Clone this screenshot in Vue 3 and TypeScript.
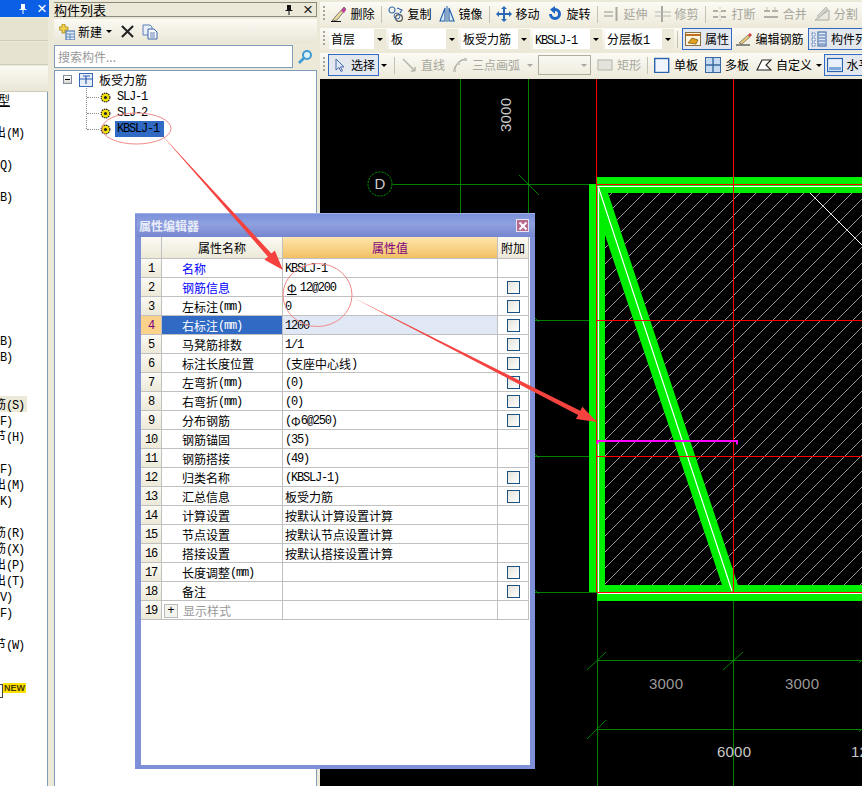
<template>
  <div class="app">
    <!-- left docked panel, mostly cut off -->
    <aside class="side">
      <div class="side-title">
        <svg class="pin" viewBox="0 0 10 12"><path d="M3 1h4v5h1.5v1h-3v4h-1V7h-3V6H3z" fill="#fff" /></svg>
        <span class="close-x white">×</span>
      </div>
      <div class="side-band"></div>
      <div class="side-band"></div>
      <div class="side-band light"></div>
      <div class="side-list">
        <div v-for="(r, i) in sideRows" :key="i" class="side-row" :class="{ hot: r.hot }">
          <span class="side-text" :class="{ short: r.short, uline: r.uline }">
            <span v-for="(p, j) in split(r.t)" :key="j" :class="{ lat: p.lat }">{{ p.t }}</span>
          </span>
          <template v-if="r.badge">
            <span class="side-check"></span>
            <span class="new-badge">NEW</span>
          </template>
        </div>
      </div>
    </aside>

    <!-- component list -->
    <section class="list-panel">
      <div class="list-title">
        <span>构件列表</span>
        <svg class="pin" viewBox="0 0 10 12"><path d="M3 1h4v5h1.5v1h-3v4h-1V7h-3V6H3z" fill="#111" /></svg>
        <span class="close-x">×</span>
      </div>
      <div class="list-tools">
        <svg class="ico" viewBox="0 0 16 16">
          <path d="M3 0h3v3h3v3H6v3H3V6H0V3h3z" fill="#f2d24a" stroke="#9a7a10" stroke-width=".7" />
          <rect x="7" y="7" width="9" height="9" fill="#dbe6f6" stroke="#3c6aa8" />
          <path d="M7 10h9M7 13h9M11 10v6" stroke="#3c6aa8" stroke-width=".7" />
        </svg>
        <span class="new-label">新建</span>
        <i class="caret"></i>
        <svg class="del" viewBox="0 0 14 14"><path d="M1 1l12 12M13 1L1 13" stroke="#222" stroke-width="2.2" /></svg>
        <svg class="ico copy" viewBox="0 0 16 16">
          <path d="M1 1h7l2 2v8H1z" fill="#e8eefa" stroke="#5c7fb8" />
          <path d="M6 5h6l3 3v7H6z" fill="#f6f8fe" stroke="#3c64a8" />
          <path d="M8 9h5M8 11h5M8 13h5" stroke="#3c64a8" stroke-width=".8" />
        </svg>
      </div>
      <div class="search">
        <div class="search-box">搜索构件...</div>
        <div class="search-btn">
          <svg viewBox="0 0 16 16" width="16" height="16">
            <circle cx="10" cy="6" r="4" fill="#dff2fb" stroke="#3e9bd4" stroke-width="2" />
            <path d="M7 9l-5 5" stroke="#3e9bd4" stroke-width="2.6" />
          </svg>
        </div>
      </div>
      <div class="tree">
        <div class="tree-root">
          <span class="minus"></span>
          <svg class="root-ico" viewBox="0 0 14 14">
            <rect x=".5" y=".5" width="13" height="13" fill="#e6eefa" stroke="#3a68b4" />
            <path d="M0 6h14M7 3v8M4 3h7" stroke="#2f5fae" stroke-width="1.2" fill="none" />
          </svg>
          <span class="root-text">板受力筋</span>
        </div>
        <div class="tree-kids">
          <div v-for="k in treeKids" :key="k" class="tree-kid">
            <svg class="gear" viewBox="0 0 10 10">
              <circle cx="5" cy="5" r="4" fill="#f4e000" stroke="#222" stroke-width="1" stroke-dasharray="1.4 .7" />
              <circle cx="5" cy="5" r="1.4" fill="#222" />
            </svg>
            <span class="kid-text lat" :class="{ sel: k === 'KBSLJ-1' }">{{ k }}</span>
          </div>
        </div>
      </div>
    </section>

    <!-- toolbars and the drawing -->
    <main class="work">
      <div class="bar first">
        <i class="grip"></i>
        <template v-for="it in toolRow1" :key="it.t">
          <i v-if="it.sep" class="sep"></i>
          <div class="tool" :class="{ off: it.off }">
            <svg class="ico" viewBox="0 0 16 16" v-html="icons[it.icon]"></svg>
            <span>{{ it.t }}</span>
          </div>
        </template>
      </div>

      <div class="bar second">
        <i class="grip"></i>
        <div v-for="(c, i) in combos" :key="c" class="combo" :class="{ narrow: i === 0 }">
          <span class="combo-text">
            <span v-for="(p, j) in split(c)" :key="j" :class="{ lat: p.lat }">{{ p.t }}</span>
          </span>
          <span class="combo-arrow"><i class="caret"></i></span>
        </div>
        <i class="sep tight"></i>
        <div class="tool on">
          <svg class="ico" viewBox="0 0 16 16" v-html="icons.prop"></svg>
          <span>属性</span>
        </div>
        <div class="tool">
          <svg class="ico" viewBox="0 0 16 16" v-html="icons.edit"></svg>
          <span>编辑钢筋</span>
        </div>
        <div class="tool on">
          <svg class="ico" viewBox="0 0 16 16" v-html="icons.list"></svg>
          <span>构件列表</span>
        </div>
      </div>

      <div class="bar third">
        <i class="grip"></i>
        <div class="tool on pick">
          <svg class="ico" viewBox="0 0 16 16" v-html="icons.pick"></svg>
          <span>选择</span>
        </div>
        <i class="caret pick-caret"></i>
        <i class="sep after-pick"></i>
        <div class="tool off">
          <svg class="ico" viewBox="0 0 16 16" v-html="icons.line"></svg>
          <span>直线</span>
        </div>
        <div class="tool off">
          <svg class="ico" viewBox="0 0 16 16" v-html="icons.arc"></svg>
          <span>三点画弧</span>
        </div>
        <i class="caret faded arc-caret"></i>
        <div class="combo dim-combo"><span class="combo-arrow"><i class="caret faded"></i></span></div>
        <div class="tool off">
          <svg class="ico" viewBox="0 0 16 16" v-html="icons.rect"></svg>
          <span>矩形</span>
        </div>
        <i class="sep"></i>
        <div class="tool">
          <svg class="ico" viewBox="0 0 16 16" v-html="icons.single"></svg>
          <span>单板</span>
        </div>
        <div class="tool">
          <svg class="ico" viewBox="0 0 16 16" v-html="icons.multi"></svg>
          <span>多板</span>
        </div>
        <div class="tool">
          <svg class="ico" viewBox="0 0 16 16" v-html="icons.custom"></svg>
          <span>自定义</span>
        </div>
        <i class="caret"></i>
        <div class="tool on flat">
          <svg class="ico" viewBox="0 0 16 16" v-html="icons.flat"></svg>
          <span>水平</span>
        </div>
      </div>

      <div class="canvas">
        <!-- viewBox uses page coordinates so the drawing reads off the screenshot -->
        <svg viewBox="320 79 542 707" width="542" height="707">
          <defs>
            <pattern id="hatch" width="16" height="16" patternUnits="userSpaceOnUse" patternTransform="translate(5 0)">
              <path d="M-1 17L17 -1" stroke="#969696" stroke-width="1" shape-rendering="crispEdges" />
            </pattern>
          </defs>

          <rect x="605" y="193" width="257" height="392" fill="url(#hatch)" />
          <path d="M810 193L862 245" stroke="#fff" stroke-width="1" />

          <g stroke="#007f00" stroke-width="1" shape-rendering="crispEdges">
            <path d="M460.5 79V600M528.5 79V600M597.5 590V786" />
            <path d="M393 184.5H597M535 320.5H597M535 456.5H597M535 592.5H597" />
            <path d="M597 660.5H862M597 729.5H862" />
            <path d="M733.5 590V786" />
          </g>
          <g stroke="#007f00" stroke-width="1">
            <path d="M519 175L539 195M528 311L539 322M528 447L539 458M528 583L539 594" />
            <path d="M587 670L606 652M723 670L743 652M587 739L606 720M859 663L862 660M859 732L862 729" />
          </g>
          <circle cx="380" cy="184" r="12" fill="none" stroke="#00a000" stroke-width="1" stroke-dasharray="2 1.2" />
          <text x="380" y="189" class="axis">D</text>

          <!-- green slab outline -->
          <g fill="#00ee00">
            <rect x="597" y="177" width="265" height="16" />
            <rect x="589" y="184" width="16" height="408" />
            <rect x="597" y="585" width="265" height="16" />
            <polygon points="598,186 608,193 738,585 722,585 598,214" />
          </g>
          <g fill="none" stroke="#fff" stroke-width="1.2">
            <path d="M598 186L732 591" />
            <path d="M598 186.5H862M598.5 186V592M598 593.5H862" />
          </g>
          <g stroke="#ff0000" stroke-width="1" shape-rendering="crispEdges" fill="none">
            <path d="M596.5 79V592M733.5 79V592" />
            <path d="M597 184.5H862M597 320.5H862M597 456.5H862M597 592.5H862" />
          </g>
          <path d="M597 441H737V444.5M597.5 441V444" fill="none" stroke="#ff00ff" stroke-width="2" />

          <text class="dim bright" transform="translate(511 132) rotate(-90)">3000</text>
          <text class="dim" x="649" y="689">3000</text>
          <text class="dim" x="785" y="689">3000</text>
          <text class="dim bright" x="717" y="757">6000</text>
          <text class="dim bright" x="851" y="757">12</text>
        </svg>
      </div>
    </main>

    <!-- property editor floating over the workspace -->
    <div class="dialog">
      <div class="dlg-title">
        <span>属性编辑器</span>
        <span class="dlg-close">
          <svg viewBox="0 0 10 10" width="10" height="10"><path d="M1.5 1.5l7 7M8.5 1.5l-7 7" stroke="#fff" stroke-width="2" /></svg>
        </span>
      </div>
      <div class="dlg-body">
        <div class="grid">
          <div class="cell no head"></div>
          <div class="cell name head">属性名称</div>
          <div class="cell value head val-head">属性值</div>
          <div class="cell add head">附加</div>

          <template v-for="r in rows" :key="r.no">
            <div class="cell no" :class="{ cur: r.no === 4 }"><span class="lat">{{ r.no }}</span></div>
            <div class="cell name" :class="{ cur: r.no === 4, link: r.no <= 2, muted: r.no === 19 }">
              <span v-if="r.no === 19" class="plus">+</span>
              <span v-for="(p, j) in split(r.name)" :key="j" :class="{ lat: p.lat, unit: p.lat }">{{ p.t }}</span>
            </div>
            <div class="cell value" :class="{ cur: r.no === 4 }">
              <span
                v-for="(p, j) in split(r.value)"
                :key="j"
                :class="{ lat: p.lat, rebar: r.no === 2 && p.t === 'Φ' }"
              >{{ p.t }}</span>
            </div>
            <div class="cell add"><span v-if="r.check" class="check"></span></div>
          </template>
        </div>
      </div>
    </div>

    <!-- red markup drawn on top of the screenshot -->
    <svg class="markup" viewBox="0 0 862 786" width="862" height="786">
      <ellipse cx="136.5" cy="128.5" rx="34.5" ry="15.5" />
      <ellipse cx="317.5" cy="295" rx="34.5" ry="31.5" />
      <polygon :points="arrow1" />
      <polygon :points="arrow2" />
    </svg>
  </div>
</template>

<script setup lang="ts">
interface PropRow {
  no: number
  name: string
  value: string
  check: boolean
}

interface SideRow {
  t: string
  short?: boolean
  uline?: boolean
  hot?: boolean
  badge?: boolean
}

const treeKids = ['SLJ-1', 'SLJ-2', 'KBSLJ-1']
const combos = ['首层', '板', '板受力筋', 'KBSLJ-1', '分层板1']

// [name, value, has checkbox]
const rawRows: [string, string, boolean][] = [
  ['名称', 'KBSLJ-1', false],
  ['钢筋信息', 'Φ12@200', true],
  ['左标注(mm)', '0', true],
  ['右标注(mm)', '1200', true],
  ['马凳筋排数', '1/1', true],
  ['标注长度位置', '(支座中心线)', true],
  ['左弯折(mm)', '(0)', true],
  ['右弯折(mm)', '(0)', true],
  ['分布钢筋', '(Φ6@250)', true],
  ['钢筋锚固', '(35)', false],
  ['钢筋搭接', '(49)', false],
  ['归类名称', '(KBSLJ-1)', true],
  ['汇总信息', '板受力筋', true],
  ['计算设置', '按默认计算设置计算', false],
  ['节点设置', '按默认节点设置计算', false],
  ['搭接设置', '按默认搭接设置计算', false],
  ['长度调整(mm)', '', true],
  ['备注', '', true],
  ['显示样式', '', false]
]
const rows: PropRow[] = rawRows.map(([name, value, check], i) => ({ no: i + 1, name, value, check }))

const blank: SideRow = { t: '' }
const sideRows: SideRow[] = [
  { t: '型', short: true, uline: true }, blank,
  { t: '出(M)' }, blank,
  { t: '(Q)', short: true }, blank,
  { t: '(B)', short: true }, blank, blank, blank, blank, blank, blank, blank, blank,
  { t: '(B)', short: true },
  { t: '(B)', short: true }, blank, blank,
  { t: '筋(S)', hot: true },
  { t: '(F)', short: true },
  { t: '节(H)' }, blank,
  { t: '(F)', short: true },
  { t: '出(M)' },
  { t: '(K)', short: true }, blank,
  { t: '筋(R)' },
  { t: '筋(X)' },
  { t: '出(P)' },
  { t: '出(T)' },
  { t: '(V)', short: true },
  { t: '(F)', short: true }, blank,
  { t: '节(W)' }, blank, blank,
  { t: '', badge: true }
]

const toolRow1 = [
  { t: '删除', icon: 'erase' },
  { t: '复制', icon: 'copy', sep: true },
  { t: '镜像', icon: 'mirror' },
  { t: '移动', icon: 'move', sep: true },
  { t: '旋转', icon: 'rotate' },
  { t: '延伸', icon: 'extend', sep: true, off: true },
  { t: '修剪', icon: 'trim', off: true },
  { t: '打断', icon: 'breakLine', sep: true, off: true },
  { t: '合并', icon: 'join', off: true },
  { t: '分割', icon: 'split', off: true }
]

const icons: Record<string, string> = {
  erase: '<path d="M1 15l5-1 9-11-2-2-9 10z" fill="#e8d8a0" stroke="#555" stroke-width=".7"/><path d="M10 5l3 2 2-3-2-3z" fill="#c0409a"/><path d="M0 15.5h10" stroke="#111"/>',
  copy: '<circle cx="4" cy="4" r="3" fill="none" stroke="#3b6ea8" stroke-width="1.2"/><circle cx="11" cy="12" r="3.4" fill="none" stroke="#555" stroke-width="1.2"/><circle cx="9" cy="10" r="3" fill="none" stroke="#3b6ea8"/><path d="M9 2l5 2-2 3" fill="none" stroke="#2d62a8" stroke-width="1.2"/>',
  mirror: '<path d="M6 2L1 15h5zM10 2l5 13h-5z" fill="#dce8f6" stroke="#1f5ca8" stroke-width="1.1"/><path d="M8 0v16" stroke="#1f5ca8"/>',
  move: '<path d="M8 0l3 3H9v4h4V5l3 3-3 3V9H9v4h2l-3 3-3-3h2V9H3v2L0 8l3-3v2h4V3H5z" fill="#2a69b8"/>',
  rotate: '<path d="M8 2a6 6 0 1 1-6 6h3a3 3 0 1 0 3-3v3L3 3.5 8 0z" fill="#1f66c4"/>',
  extend: '<path d="M0 6h9M0 10h9" stroke="#b4b4aa" stroke-width="1.4"/><path d="M12.5 1v14" stroke="#a8a8a0" stroke-width="2"/>',
  trim: '<path d="M7 0v16" stroke="#a8a8a0" stroke-width="2"/><path d="M0 6h16M0 10h16" stroke="#b8b8ae" stroke-width="1.2"/>',
  breakLine: '<path d="M1 5h14M1 11h14" stroke="#b0b0a6" stroke-width="2" stroke-dasharray="5 3"/><path d="M8 1v14" stroke="#c8c8be" stroke-dasharray="2 2"/>',
  join: '<path d="M1 5h6M9 5h6M1 11h14" stroke="#b0b0a6" stroke-width="2"/><path d="M4 1v3M12 1v3" stroke="#c0c0b6"/>',
  split: '<path d="M1 14h14V4z" fill="#e8e8de" stroke="#aaaaa0"/><path d="M3 10l9-9 2 2-9 9z" fill="#d0d0c6" stroke="#aaaaa0" stroke-width=".6"/>',
  prop: '<rect x=".5" y="1.5" width="15" height="13" fill="#fff6e0" stroke="#8a7040"/><path d="M1 4h14" stroke="#c07020" stroke-width="2"/><path d="M3 12l4-5 6 2-2 4z" fill="#e0a020" stroke="#705010" stroke-width=".7"/>',
  edit: '<path d="M0 14h14" stroke="#222"/><path d="M3 12l9-8 2 2-8 7z" fill="#e6c878" stroke="#555" stroke-width=".6"/><path d="M12 4l2-2 2 2-2 2z" fill="#d04040"/>',
  list: '<path d="M1 2h3v3H1zM1 7h3v3H1zM1 12h3v3H1z" fill="#fff" stroke="#3a6ab0" stroke-dasharray="1 .6"/><rect x="7" y="1" width="8" height="14" fill="#dfe8f6" stroke="#34609e"/><path d="M8 4h6M8 7h6M8 10h6M8 13h6" stroke="#34609e" stroke-width=".9"/>',
  pick: '<path d="M5 2v11l3-2.5 2 4 1.5-.8-2-3.8H13z" fill="#dfe8f8" stroke="#4a6aa8"/>',
  line: '<path d="M2 2l12 12M14 14v-4M14 14h-4" stroke="#b8b8ae" stroke-width="1.6" fill="none"/>',
  arc: '<path d="M2 15C3 8 7 3 14 2" fill="none" stroke="#b0b0a6" stroke-width="1.6"/><rect x="1" y="12" width="3" height="3" fill="#c8c8be"/><rect x="5" y="5" width="3" height="3" fill="#c8c8be"/><rect x="12" y="1" width="3" height="3" fill="#c8c8be"/>',
  rect: '<rect x="1" y="3" width="14" height="10" fill="#e4e4dc" stroke="#b4b4aa"/>',
  single: '<rect x=".7" y="1.5" width="14" height="14" fill="#f0f5fc" stroke="#2a64b0" stroke-width="1.4"/>',
  multi: '<rect x=".5" y=".5" width="15" height="15" fill="#c6daf2" stroke="#38689e"/><path d="M8 0v16M0 8h16" stroke="#38689e" stroke-width="1.4"/>',
  custom: '<path d="M1 13L6 3h9l-5 5 5 5z" fill="#fff" stroke="#222" stroke-width="1.1"/>',
  flat: '<rect x=".5" y="1.5" width="15" height="13" fill="#eaf1fb" stroke="#2a64b0" stroke-width="1.2"/><path d="M2 10h12v3H2z" fill="#7fa8dc"/>'
}

// chop a label into latin and CJK runs, they use different fonts and sizes
function split(s: string) {
  const parts = s.match(/[\x20-\x7e]+|[^\x20-\x7e]+/g) ?? []
  return parts.map((t) => ({ t, lat: /^[\x20-\x7e]/.test(t) }))
}

// tapered markup arrow, thin at the start, with a head at the tip
function arrow(x1: number, y1: number, x2: number, y2: number, shaft: number, head: number, len: number) {
  const d = Math.hypot(x2 - x1, y2 - y1)
  const ux = (x2 - x1) / d
  const uy = (y2 - y1) / d
  const nx = -uy
  const ny = ux
  const bx = x2 - ux * len
  const by = y2 - uy * len
  const pts = [
    [x1, y1],
    [bx + nx * shaft, by + ny * shaft],
    [bx + nx * head, by + ny * head],
    [x2, y2],
    [bx - nx * head, by - ny * head],
    [bx - nx * shaft, by - ny * shaft]
  ]
  return pts.map((p) => `${p[0].toFixed(1)},${p[1].toFixed(1)}`).join(' ')
}

const arrow1 = arrow(160, 133, 283, 270, 2.4, 7, 20)
const arrow2 = arrow(352, 297, 597, 422, 2.4, 7, 20)
</script>

<style scoped>
.app {
  position: relative;
  display: flex;
  width: 862px;
  height: 786px;
  overflow: hidden;
  background: #ece9d8;
  color: #000;
  font: 12px/16px "Noto Sans CJK SC", sans-serif;
}

.lat {
  font-family: "Liberation Mono", monospace;
  letter-spacing: -1.2px;
}

.ico {
  flex: none;
  width: 16px;
  height: 16px;
}

.caret {
  display: inline-block;
  flex: none;
  width: 0;
  height: 0;
  border: 3px solid transparent;
  border-top: 3px solid #000;
  border-bottom: 0;
}

.caret.faded {
  border-top-color: #a8a8a0;
}

/* left panel */
.side {
  flex: none;
  display: flex;
  flex-direction: column;
  width: 49px;
}

.side-title {
  display: flex;
  align-items: center;
  gap: 9px;
  height: 17px;
  padding-left: 18px;
  background: #0a5fe6;
}

.pin {
  flex: none;
  width: 10px;
  height: 12px;
}

.close-x {
  font: 17px/16px "Liberation Sans", sans-serif;
}

.close-x.white {
  color: #fff;
}

.side-band {
  height: 22px;
  margin: 1px 1px 0 0;
  background: #e6e3d0;
  border-bottom: 1px solid #cfccbc;
}

.side-band.light {
  height: 25px;
  background: linear-gradient(#fbfaf4, #e9e6d6);
}

.side-list {
  flex: 1;
  overflow: hidden;
  background: #fff;
  border-right: 1px solid #7f9db9;
  margin-right: 1px;
}

.side-row {
  position: relative;
  display: flex;
  justify-content: flex-end;
  height: 16px;
  width: 47px;
}

.side-text {
  flex: none;
  margin-right: 23px;
  white-space: nowrap;
}

.side-text.short {
  margin-right: 35px;
}

.side-text.uline {
  text-decoration: underline;
  margin-right: 37px;
}

.side-row.hot {
  width: 27px;
  background: #ece9d8;
}

.side-row.hot .side-text {
  margin-right: 3px;
}

.side-check {
  position: absolute;
  left: -11px;
  top: 0;
  width: 12px;
  height: 12px;
  border: 1px solid #444;
}

.new-badge {
  position: absolute;
  left: 3px;
  top: -1px;
  height: 10px;
  padding: 0 1px;
  background: #ffe100;
  color: #4a3a00;
  font: bold 9px/10px "Liberation Sans", sans-serif;
}

/* component list */
.list-panel {
  flex: none;
  display: flex;
  flex-direction: column;
  box-sizing: border-box;
  width: 269px;
  padding: 2px 1px 0 5px;
}

.list-title {
  display: flex;
  align-items: center;
  box-sizing: border-box;
  height: 15px;
  border: 1px solid #8c8a7c;
  border-left: 0;
  font-size: 13px;
}

.list-title span:first-child {
  flex: 1;
}

.list-title .pin {
  margin-right: 9px;
}

.list-title .close-x {
  margin-right: 3px;
  color: #222;
}

.list-tools {
  display: flex;
  align-items: center;
  height: 25px;
  margin-top: 2px;
  padding-left: 5px;
  background: linear-gradient(#fbfaf4, #e9e6d6);
}

.new-label {
  margin-left: 3px;
}

.list-tools .caret {
  margin-left: 4px;
}

.del {
  width: 13px;
  height: 13px;
  margin-left: 9px;
}

.copy {
  margin-left: 8px;
}

.search {
  display: flex;
  height: 23px;
  margin-top: 1px;
}

.search-box {
  flex: 1;
  padding-left: 3px;
  background: #fff;
  border: 1px solid #7f9db9;
  color: #999;
  line-height: 21px;
}

.search-btn {
  display: flex;
  align-items: center;
  justify-content: center;
  width: 24px;
}

.tree {
  flex: 1;
  margin-top: 2px;
  padding-left: 8px;
  background: #fff;
  border: 1px solid #7f9db9;
  border-bottom: 0;
}

.tree-root {
  display: flex;
  align-items: center;
  height: 17px;
}

.minus {
  position: relative;
  width: 9px;
  height: 9px;
  background: linear-gradient(#fff, #d8d8d0);
  border: 1px solid #7f8c9c;
  box-sizing: border-box;
}

.minus::after {
  content: "";
  position: absolute;
  left: 1px;
  top: 3px;
  width: 5px;
  height: 1px;
  background: #000;
}

.root-ico {
  width: 14px;
  height: 14px;
  margin-left: 7px;
}

.root-text {
  margin-left: 6px;
}

.tree-kids {
  margin-left: 23px;
  padding-top: 1px;
  height: 40px;
  border-left: 1px dotted #888;
}

.tree-kid {
  position: relative;
  display: flex;
  align-items: center;
  height: 16px;
  padding-left: 13px;
}

.tree-kid::before {
  content: "";
  position: absolute;
  left: 0;
  top: 8px;
  width: 12px;
  border-top: 1px dotted #888;
}

.gear {
  width: 11px;
  height: 11px;
}

.kid-text {
  margin-left: 4px;
  padding: 0 5px 0 2px;
}

.kid-text.sel {
  background: #316ac5;
}

/* toolbars */
.work {
  flex: 1;
  display: flex;
  flex-direction: column;
  min-width: 0;
  padding-top: 2px;
}

.bar {
  display: flex;
  align-items: center;
  height: 24px;
  margin-left: 2px;
  padding-left: 3px;
  overflow: hidden;
  background: linear-gradient(#fbfaf4, #eeebdc);
  white-space: nowrap;
}

.bar.second {
  height: 22px;
  margin-top: 2px;
}

.bar.third {
  margin-top: 3px;
}

.grip {
  flex: none;
  width: 2px;
  height: 16px;
  margin-right: 2px;
  background: repeating-linear-gradient(#a8a698 0 2px, transparent 2px 4px);
}

.sep {
  flex: none;
  width: 1px;
  height: 17px;
  margin: 0 2.5px;
  background: #c4c2b2;
}

.sep.tight {
  margin: 0 3px 0 0;
}

.sep.after-pick {
  margin-left: 7px;
}

.tool {
  flex: none;
  display: flex;
  align-items: center;
  gap: 4px;
  padding: 0 3.5px;
  height: 22px;
  box-sizing: border-box;
}

.tool.off {
  color: #a6a69c;
}

.tool.on {
  border: 1px solid #316ac5;
  background: #e3e7ee;
  padding: 0 2px;
  margin-left: 1px;
}

.tool.pick {
  padding-right: 3px;
  margin-left: 1px;
}

.tool.flat {
  margin-left: 2px;
}

.pick-caret {
  margin-left: 2px;
}

.arc-caret {
  margin-left: 3px;
}

.combo {
  flex: none;
  display: flex;
  width: 69px;
  height: 20px;
  margin-right: 3px;
  background: #fff;
  box-sizing: border-box;
}

.combo.narrow {
  width: 57px;
  margin-left: 2px;
}

.combo.dim-combo {
  width: 53px;
  margin-left: 5px;
  background: transparent;
  border: 1px solid #b0ae9e;
}

.combo-text {
  flex: 1;
  padding-left: 2px;
  line-height: 20px;
}

.combo-arrow {
  display: flex;
  align-items: center;
  justify-content: center;
  margin-left: auto;
  width: 12px;
  background: #ece9d8;
}

.dim-combo .combo-arrow {
  background: transparent;
}

.canvas {
  flex: 1;
  margin: 2px 0 0 2px;
  background: #000;
  overflow: hidden;
}

.canvas svg {
  display: block;
}

text.dim {
  fill: #9a9a9a;
  font: 15px "Liberation Sans", sans-serif;
  letter-spacing: .2px;
}

text.bright {
  fill: #c8c8c8;
}

.axis {
  fill: #ccc;
  font: 15px "Liberation Sans", sans-serif;
  text-anchor: middle;
}

/* dialog */
.dialog {
  position: absolute;
  left: 135px;
  top: 213px;
  display: flex;
  flex-direction: column;
  width: 400px;
  height: 556px;
  box-sizing: border-box;
  padding: 0 5px 4px 6px;
  background: #7f8fd8;
  border-top: 1px solid #9fb0e6;
}

.dlg-title {
  display: flex;
  align-items: center;
  justify-content: space-between;
  flex: none;
  height: 23px;
  margin: 0 -5px 0 -4px;
  padding: 0 6px 0 2px;
  background: linear-gradient(#7c91dc, #8ea0de 45%, #7686cf);
  color: #e8ecf8;
  font-weight: 700;
}

.dlg-close {
  display: flex;
  align-items: center;
  justify-content: center;
  width: 13px;
  height: 13px;
  background: #b66a8c;
  border: 1px solid #e6e6f4;
  box-sizing: border-box;
}

.dlg-body {
  flex: 1;
  background: #fff;
}

.grid {
  display: grid;
  grid-template-columns: 21px 121px 215px 31px;
  grid-auto-rows: 19px;
  grid-template-rows: 22px;
  width: 388px;
}

.cell {
  display: flex;
  align-items: center;
  min-width: 0;
  box-sizing: border-box;
  padding-top: 2px;
  border-right: 1px solid #c0c0c0;
  border-bottom: 1px solid #c0c0c0;
  white-space: nowrap;
}

.cell.no {
  justify-content: center;
  padding-top: 1px;
  background: linear-gradient(#fbfaf4, #ece9d8);
}

.cell.no.cur {
  background: #fbd28a;
  color: #800080;
}

.cell.name {
  padding-left: 20px;
}

.cell.name.cur {
  background: #316ac5;
  color: #fff;
}

.cell.name.link {
  color: #0000ff;
}

.cell.name.muted {
  padding-left: 2px;
  color: #999;
}

.plus {
  flex: none;
  width: 12px;
  height: 12px;
  margin-right: 5px;
  border: 1px solid #bbb;
  background: #f4f4ee;
  color: #000;
  font: 12px/11px "Liberation Sans", sans-serif;
  text-align: center;
}

.cell.value {
  padding-left: 2px;
}

.cell.value.cur {
  background: #dfe8f4;
}

.cell.head {
  justify-content: center;
  padding: 0;
  background: linear-gradient(#fbfaf4, #ece9d8);
}

.cell.val-head {
  background: linear-gradient(#fde6ac, #f3c063);
  color: #800080;
}

.cell.add {
  justify-content: center;
  padding-top: 0;
}

.check {
  width: 13px;
  height: 13px;
  box-sizing: border-box;
  border: 1px solid #1c5180;
  background: linear-gradient(135deg, #e4e3dc, #fff);
}

span.rebar {
  margin: 0 3px 0 2px;
  text-decoration: underline;
}

.markup {
  position: absolute;
  left: 0;
  top: 0;
  pointer-events: none;
}

.markup ellipse {
  fill: none;
  stroke: #f08a8a;
  stroke-width: 1;
}

.markup polygon {
  fill: #f4433f;
}
</style>
